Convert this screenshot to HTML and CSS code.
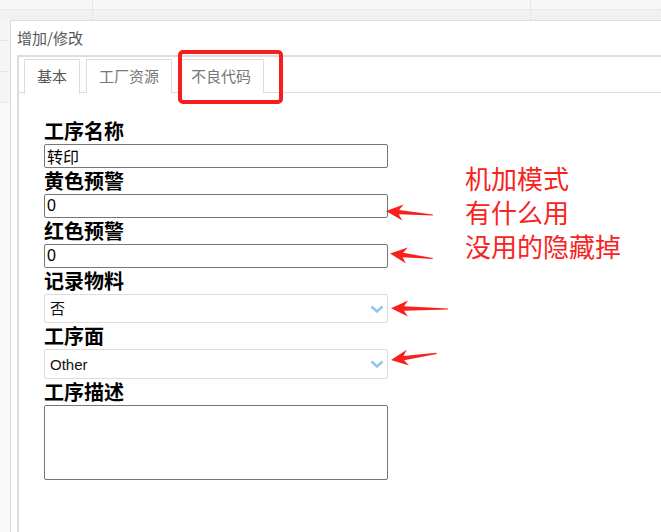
FILE: index.html
```html
<!DOCTYPE html>
<html lang="zh-CN">
<head>
  <meta charset="UTF-8">
  <title>增加/修改</title>
  <link rel="stylesheet" href="styles.css">
</head>
<body>
  <div class="topbar">
    <div class="cell"></div><div class="cell"></div><div class="cell last"></div>
    <div class="cell low"></div><div class="cell low"></div><div class="cell low last"></div>
  </div>
  <div class="main">
    <div class="backdrop">
      <div class="row r1"></div>
      <div class="row"></div>
      <div class="row"></div>
    </div>
    <div class="dialog">
      <div class="dialog-title">增加/修改</div>
      <div class="panel">
        <ul class="tabs">
          <li class="tab active">基本</li>
          <li class="tab">工厂资源</li>
          <li class="tab">不良代码</li>
        </ul>
        <form class="form">
          <label>工序名称</label>
          <input type="text" value="转印">
          <label>黄色预警</label>
          <input type="text" value="0">
          <label>红色预警</label>
          <input type="text" value="0">
          <label>记录物料</label>
          <div class="select-wrap">
            <select><option>否</option><option>是</option></select>
            <svg class="chevron" width="14" height="8" viewBox="0 0 14 8"><path d="M1.5 1.5 L7 6.5 L12.5 1.5" fill="none" stroke="#8ec6ee" stroke-width="2.4"/></svg>
          </div>
          <label>工序面</label>
          <div class="select-wrap tall">
            <select><option>Other</option></select>
            <svg class="chevron" width="14" height="8" viewBox="0 0 14 8"><path d="M1.5 1.5 L7 6.5 L12.5 1.5" fill="none" stroke="#8ec6ee" stroke-width="2.4"/></svg>
          </div>
          <label>工序描述</label>
          <textarea></textarea>
        </form>
      </div>
    </div>
  </div>

  <!-- annotations drawn over the screenshot -->
  <div class="mark-box"></div>
  <div class="note">机加模式<br>有什么用<br>没用的隐藏掉</div>
  <svg class="arrows" width="661" height="532" viewBox="0 0 661 532">
    <g fill="#f8201c">
      <polygon transform="translate(386 211) rotate(4.9)" points="0,0 17,-8 13,-2.2 47,-0.6 47,0.6 13,2.2 17,8"/>
      <polygon transform="translate(390 253.5) rotate(6.7)" points="0,0 17,-8 13,-2.2 43,-0.6 43,0.6 13,2.2 17,8"/>
      <polygon transform="translate(391 308.3) rotate(0.7)" points="0,0 17,-8 13,-2.2 57,-0.6 57,0.6 13,2.2 17,8"/>
      <polygon transform="translate(391 360) rotate(-8.3)" points="0,0 17,-8 13,-2.2 46,-0.6 46,0.6 13,2.2 17,8"/>
    </g>
  </svg>
</body>
</html>
```

FILE: styles.css
```css
* { box-sizing: border-box; }
html, body { height: 532px; }
body { margin: 0; background: #fff; font-family: "Liberation Sans", "Noto Sans CJK SC", sans-serif; overflow: hidden; }

.topbar { display: grid; grid-template-columns: 93px 438px 1fr; grid-template-rows: 10px 10px; }
.topbar .cell { background: #f7f7f7; border-right: 1px dotted #ddd; border-bottom: 1px dotted #ddd; }
.topbar .cell.low { background: #f1f1f1; border-bottom: none; }
.topbar .cell.last { border-right: none; }

.main { display: flex; height: 512px; }
.backdrop { width: 10px; background: #f8f8f8; flex: none; }
.backdrop .row { height: 31px; border-bottom: 1px dotted #ddd; background: #f5f5f5; }
.backdrop .row.r1 { height: 21px; }

.dialog { flex: 1; display: flex; flex-direction: column; border-top: 1px solid #ddd; border-left: 1px solid #ddd; background: #fff; }
.dialog-title { height: 34px; flex: none; padding: 8px 0 0 6px; font-family: "Noto Sans CJK SC", sans-serif; font-size: 15px; line-height: 18px; color: #555; }

.panel { flex: 1; margin-left: 6px; border-top: 2px solid #ddd; border-left: 2px solid #ddd; }
.tabs { list-style: none; margin: 0; padding: 2px 0 0 0; display: flex; border-bottom: 1px solid #ddd; height: 36px; }
.tab { margin-left: 5px; height: 34px; padding: 0 12px; border: 1px solid #ddd; border-bottom: none; font-family: "Noto Sans CJK SC", sans-serif; font-size: 15px; line-height: 32px; color: #777; background: #fff; }
.tab + .tab { margin-left: 6px; }
.tab.active { color: #555; height: 35px; margin-bottom: -1px; }

.form { display: flex; flex-direction: column; align-items: flex-start; padding: 25px 0 0 25px; }
.form label { display: block; font-family: "Noto Sans CJK SC", sans-serif; font-weight: bold; font-size: 20px; line-height: 26px; color: #000; }
.form input { width: 344px; height: 24px; margin: 0; padding: 1px 2px; border: 1px solid #767676; border-radius: 2px; font-family: "Liberation Sans", "Noto Sans CJK SC", sans-serif; font-size: 16px; color: #000; }

.select-wrap { position: relative; width: 344px; height: 29px; }
.select-wrap.tall { height: 30px; }
.select-wrap select { width: 100%; height: 100%; margin: 0; padding: 0 0 0 5px; border: 1px solid #ddd; border-radius: 2px; background: #fff; appearance: none; -webkit-appearance: none; font-family: "Liberation Sans", "Noto Sans CJK SC", sans-serif; font-size: 15px; color: #111; }
.chevron { position: absolute; right: 4px; top: 11px; }

.form textarea { width: 344px; height: 75px; margin: 0; border: 1px solid #767676; border-radius: 2px; resize: none; }

.mark-box { position: absolute; left: 178px; top: 50px; width: 105px; height: 54px; border: 4px solid #f81c1c; border-radius: 5px; }
.note { position: absolute; left: 465px; top: 161px; font-family: "Noto Sans CJK SC", sans-serif; font-size: 26px; line-height: 34px; color: #f8231e; }
.arrows { position: absolute; left: 0; top: 0; pointer-events: none; }
```
